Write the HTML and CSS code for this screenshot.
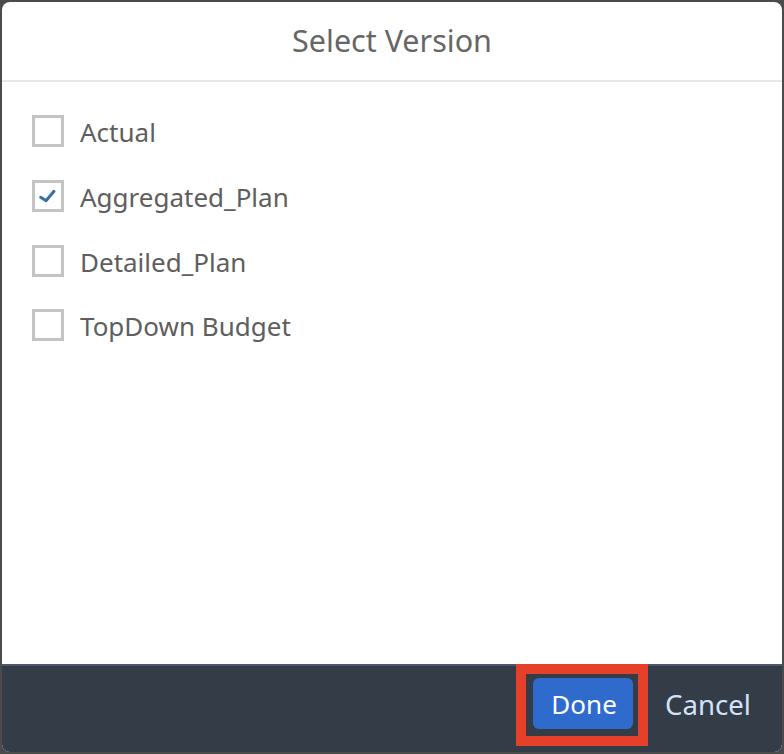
FILE: index.html
```html
<!DOCTYPE html>
<html>
<head>
<meta charset="utf-8">
<link rel="stylesheet" href="styles.css">
</head>
<body>
<div class="dialog">
  <header class="dialog-header">
    <h1 class="title">Select Version</h1>
  </header>
  <ul class="list">
    <li class="item"><span class="box"></span><span class="label">Actual</span></li>
    <li class="item"><span class="box"><svg class="check" viewBox="0 0 26 26" width="26" height="26"><path d="M5.7 14.3 L11 17.7 L19 8.3" fill="none" stroke="#3b6ea8" stroke-width="3" stroke-linecap="round" stroke-linejoin="round"/></svg></span><span class="label">Aggregated_Plan</span></li>
    <li class="item"><span class="box"></span><span class="label">Detailed_Plan</span></li>
    <li class="item"><span class="box"></span><span class="label">TopDown Budget</span></li>
  </ul>
  <footer class="dialog-footer">
    <div class="highlight"><button class="btn btn-primary">Done</button></div>
    <button class="btn btn-ghost">Cancel</button>
  </footer>
</div>
</body>
</html>
```

FILE: styles.css
```css
html, body {
  margin: 0;
  padding: 0;
}
body {
  background: #4b4b4b;
  width: 784px;
  height: 754px;
  overflow: hidden;
  font-family: "Noto Sans", "Open Sans", sans-serif;
}
.dialog {
  margin: 2px;
  width: 780px;
  height: 750px;
  background: #ffffff;
  border-radius: 8px;
  overflow: hidden;
  display: flex;
  flex-direction: column;
}
.dialog-header {
  height: 78px;
  border-bottom: 2px solid #e8e8e8;
  display: flex;
  align-items: center;
  justify-content: center;
  flex-shrink: 0;
}
.title {
  margin: 0 0 2px;
  font-size: 30.5px;
  font-weight: 400;
  color: #666666;
}
.list {
  list-style: none;
  margin: 0;
  padding: 17px 0 0 30px;
  flex: 1;
}
.item {
  height: 64.7px;
  display: flex;
  align-items: center;
  gap: 16px;
}
.box {
  width: 26px;
  height: 26px;
  border: 3px solid #c4c4c4;
  display: flex;
  align-items: center;
  justify-content: center;
  background: #fff;
}
.check {
  display: block;
}
.label {
  font-size: 26px;
  margin-top: 2px;
  color: #5e5e5e;
}
.dialog-footer {
  height: 86px;
  border-top: 2px solid #4a596b;
  background: #333c47;
  display: flex;
  justify-content: flex-end;
  align-items: flex-start;
  padding-right: 11px;
  flex-shrink: 0;
}
.highlight {
  position: relative;
  margin-top: -2px;
  border: 10px solid #e6402a;
  padding: 4px 5px 7px 7px;
}
.btn {
  font-family: inherit;
  font-size: 26px;
  border: none;
  cursor: pointer;
}
.btn-primary {
  display: block;
  width: 100px;
  height: 51px;
  padding: 0 0 0 2px;
  background: #2f6bcc;
  color: #ffffff;
  border-radius: 6px;
}
.btn-ghost {
  background: transparent;
  color: #d3e2f7;
  height: 51px;
  margin-top: 12px;
  font-size: 27.6px;
  padding: 0 20px 0 17px;
}
```
